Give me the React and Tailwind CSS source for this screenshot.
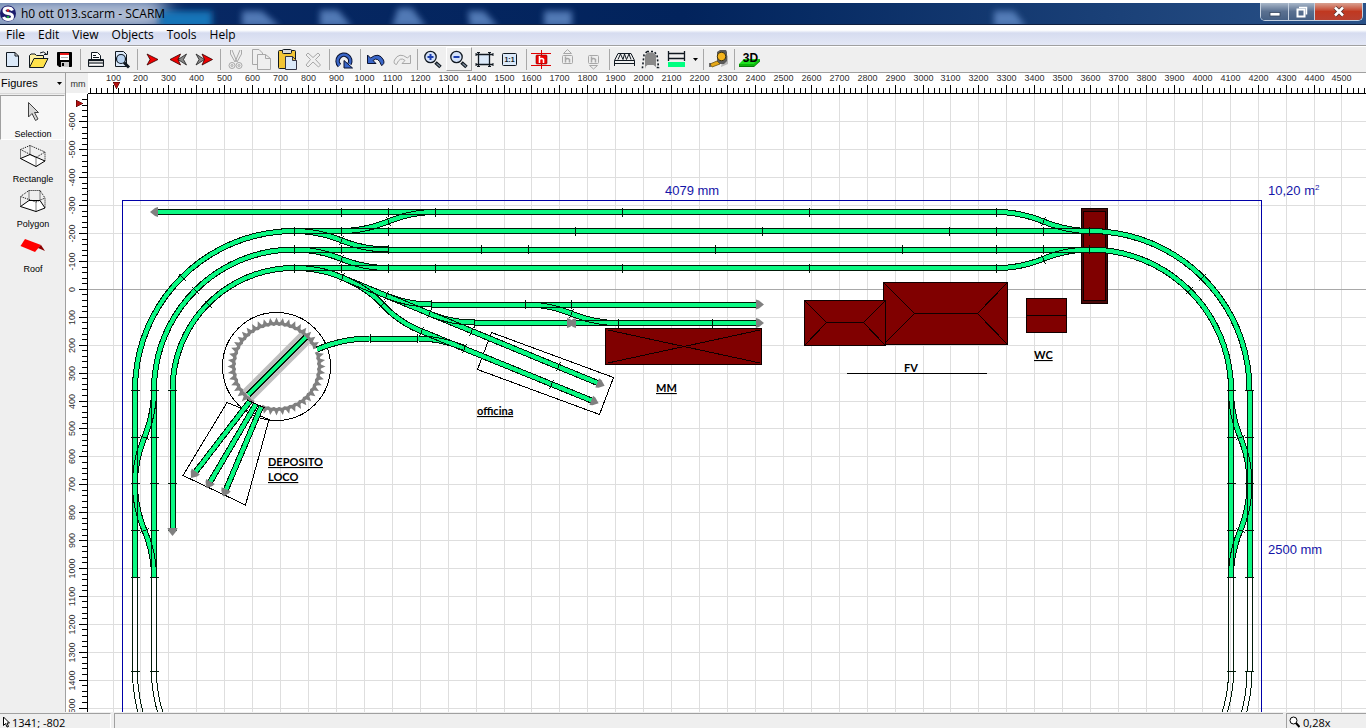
import React from "react";

/* ---------- scale helpers (millimetres to canvas units) ---------- */
const ORIGIN_X = 88;
const ORIGIN_Y = 94;
const gx = (mm) => Math.floor(85.1 + mm * 0.2793) + 0.5;
const gy = (mm) => Math.floor(289.4 + mm * 0.2791) + 0.5;
const range = (from, to, step) => {
  const out = [];
  for (let v = from; v <= to; v += step) out.push(v);
  return out;
};

/* ---------- track geometry ---------- */
const K = 0.5523;
const line = (x1, y1, x2, y2) => [[x1, y1], [x2, y2]];
const curve = (...p) => {
  const pts = [];
  for (let s = 0; s + 6 < p.length; s += 6) {
    const [x0, y0, x1, y1, x2, y2, x3, y3] = p.slice(s, s + 8);
    for (let i = s ? 1 : 0; i <= 20; i++) {
      const t = i / 20;
      const u = 1 - t;
      pts.push([
        u * u * u * x0 + 3 * u * u * t * x1 + 3 * u * t * t * x2 + t * t * t * x3,
        u * u * u * y0 + 3 * u * u * t * y1 + 3 * u * t * t * y2 + t * t * t * y3,
      ]);
    }
  }
  return pts;
};
const quarter = (x1, y1, x2, y2) =>
  curve(x1, y1, x1 + (x2 - x1) * K, y1, x2, y2 - (y2 - y1) * K, x2, y2);
const sH = (x0, y0, x1, y1) => {
  const mx = (x0 + x1) / 2;
  const my = (y0 + y1) / 2;
  const d = y1 > y0 ? 6 : -6;
  return curve(x0, y0, x0 + 16, y0, mx - 15, my - d, mx, my, mx + 15, my + d, x1 - 16, y1, x1, y1);
};
const sV = (x0, y0, x1, y1) => {
  const mx = (x0 + x1) / 2;
  const my = (y0 + y1) / 2;
  const d = x1 > x0 ? 6 : -6;
  return curve(x0, y0, x0, y0 + 16, mx - d, my - 15, mx, my, mx + d, my + 15, x1, y1 - 16, x1, y1);
};

const TRACKS = [
  line(157, 212, 999, 212),
  line(294, 231, 1090, 231),
  line(294, 249.5, 1090, 249.5),
  line(294, 268, 999, 268),
  quarter(294, 231, 135, 390),
  quarter(294, 249.5, 154, 390),
  quarter(294, 268, 172.5, 390),
  line(135, 390, 135, 577),
  line(154, 390, 154, 577),
  line(172.5, 390, 172.5, 530),
  sV(154, 390, 135, 484),
  sV(135, 484, 154, 577),
  sH(341, 231, 435, 212),
  sH(294, 231, 388, 249.5),
  sH(294, 249.5, 388, 268),
  sH(997, 212, 1090, 231),
  sH(997, 268, 1090, 249.5),
  quarter(1090, 231, 1249.5, 390),
  quarter(1090, 249.5, 1231, 390),
  line(1249.5, 390, 1249.5, 577),
  line(1231, 390, 1231, 577),
  sV(1231, 390, 1249.5, 484),
  sV(1249.5, 484, 1231, 577),
  curve(294, 268, 311, 268, 327, 271, 342, 277.5),
  line(342, 277.5, 600, 384),
  curve(342, 277.5, 356, 283.5, 370, 291, 382, 304, 393, 316, 406, 325, 421, 331),
  line(421, 331, 594, 401.5),
  curve(386, 295.5, 401, 301.5, 415, 304.5, 431.5, 304.5),
  line(431.5, 304.5, 758, 304.5),
  curve(429, 313.5, 444, 319.5, 458, 322.5, 474.5, 322.5),
  line(474.5, 322.5, 570, 322.5),
  line(574, 323, 758, 323),
  sH(525.5, 304.5, 618, 323),
  curve(317, 349.5, 335, 342, 352, 338.5, 370.5, 338.5),
  line(370.5, 338.5, 417.5, 338.5),
  curve(417.5, 338.5, 434, 338.5, 449, 342, 464.5, 348),
  line(250, 401, 194, 474),
  line(256, 404, 209, 484),
  line(261, 407, 225, 492),
];

const HIDDEN_TRACKS = [
  line(135, 577, 135, 671),
  line(154, 577, 154, 671),
  line(1231, 577, 1231, 671),
  line(1249.5, 577, 1249.5, 671),
  quarter(294, 830, 135, 671),
  quarter(294, 811, 154, 671),
  quarter(1090, 830, 1249.5, 671),
  quarter(1090, 811, 1231, 671),
];

const BRIDGE = line(305.5, 337.5, 248, 395);

const offset = (pts, d) =>
  pts
    .map(([x, y], i) => {
      const [ax, ay] = pts[Math.max(0, i - 1)];
      const [bx, by] = pts[Math.min(pts.length - 1, i + 1)];
      const l = Math.hypot(bx - ax, by - ay) || 1;
      return `${(x - ((by - ay) / l) * d).toFixed(2)},${(y + ((bx - ax) / l) * d).toFixed(2)}`;
    })
    .join(" ");
const toPoints = (pts) => pts.map((p) => p.join(",")).join(" ");

/* joints: [x, y, track direction in degrees] */
const JOINTS = [
  ...[341, 388, 435, 622, 809, 996].map((x) => [x, 212, 0]),
  ...[294, 341, 388, 575, 762, 949, 996, 1043, 1089].map((x) => [x, 231, 0]),
  ...[294, 341, 388, 481, 528, 715, 902, 996, 1043, 1089].map((x) => [x, 249.5, 0]),
  ...[294, 341, 388, 435, 622, 809, 996].map((x) => [x, 268, 0]),
  ...[431, 525, 571].map((x) => [x, 304.5, 0]),
  ...[474, 618, 712].map((x) => [x, 323, 0]),
  [370, 338.5, 0], [417, 338.5, 0],
  ...[390, 437, 483, 530, 577, 671].flatMap((y) => [135, 154, 1231, 1249.5].map((x) => [x, y, 90])),
  [172.5, 390, 90], [172.5, 483, 90], [172.5, 530, 90],
  [182, 277.5, -45], [195, 290.5, -45], [208, 304, -45],
  [1202, 277.5, 45], [1189, 290.5, 45],
  [388, 221.5, -22], [341, 240, 22], [341, 259, 22], [342, 277.5, 22],
  [1043, 221.5, 22], [1043, 259, -22],
  [386, 295.5, 22], [429, 313.5, 22], [471, 331, 22], [558, 366.5, 22],
  [382, 304, 45], [421, 331, 22], [464.5, 348.5, 22], [551, 384, 22], [571, 313.5, 22],
  [144.5, 437, 112], [144.5, 530, 68], [1240, 437, 68], [1240, 530, 112],
];

const BUFFERS = [
  [155, 212, 180], [172.5, 531, 90], [759, 304.5, 0], [759, 323, 0],
  [573, 323, 180], [570, 323, 0], [600, 384, 22], [594, 401.5, 22],
  [194, 474, 127], [209, 484, 120], [225, 492, 113],
];

const TEETH = range(0, 352.5, 7.5).filter((a) => !(a >= 110 && a <= 126) && a !== 337.5);

function TrackPlan() {
  return (
    <svg className="block h-full w-full" role="img" aria-label="Track plan">
      <g transform={`translate(${-ORIGIN_X} ${-ORIGIN_Y})`}>
        <g shapeRendering="crispEdges">
          {range(100, 9000, 100).map((mm) => (
            <line key={`v${mm}`} x1={gx(mm)} x2={gx(mm)} y1="0" y2="3000" stroke="#dedede" />
          ))}
          {range(-600, 9000, 100).map((mm) => (
            <line key={`h${mm}`} x1="0" x2="4000" y1={gy(mm)} y2={gy(mm)} stroke={mm === 0 ? "#a8a8a8" : "#dedede"} />
          ))}
        </g>
        <rect x="122.5" y="200.5" width="1139" height="699" fill="none" stroke="#0000a8" shapeRendering="crispEdges" />

        {/* buildings */}
        <g fill="#800000" stroke="#100000" shapeRendering="crispEdges">
          <rect x="605.5" y="328.5" width="156" height="36" />
          <path d="M608 330L760 363M608 363L760 330" />
          <rect x="883.5" y="282.5" width="124" height="62" />
          <path d="M884 283L914.5 313.5L884 344M1007 283L977.5 313.5L1007 344M914.5 313.5H977.5" fill="none" />
          <rect x="804.5" y="300.5" width="81" height="45" />
          <path d="M805 301L826.5 322.5L805 345M885 301L863.5 322.5L885 345M826.5 322.5H863.5" fill="none" />
          <rect x="1026.5" y="298.5" width="40" height="34" />
          <path d="M1026.5 315.5H1066.5" />
          <rect x="1081.5" y="208.5" width="26" height="95" fill="#4a0808" />
          <rect x="1083.5" y="211.5" width="22" height="89" />
        </g>

        <g fill="none" stroke="#000" shapeRendering="crispEdges">
          <path d="M491.5 332.5L613.5 377.5L599.5 414.5L477.5 369.5Z" />
          <path d="M227 402.5L183 475.5L245.5 505L269 419.5Z" />
        </g>
        <circle cx="276.5" cy="366.5" r="54" fill="none" stroke="#000" shapeRendering="crispEdges" />
        <line x1="308" y1="335" x2="245.5" y2="397.5" stroke="#c0c0c0" strokeWidth="15" />
        {TEETH.map((a) => (
          <path key={a} d="M0 -49L2 -44.500L4 -43.500L3.500 -40.500L0 -41.500L-3.500 -40.500L-4 -43.500L-2 -44.500Z" fill="#808080" transform={`translate(276.5 366.5) rotate(${a + 90})`} />
        ))}
        <g shapeRendering="crispEdges" fill="none">
          {[...TRACKS, BRIDGE].map((t, i) => (
            <polyline key={i} points={toPoints(t)} stroke="#0af882" strokeWidth="5" />
          ))}
          {[...TRACKS, ...HIDDEN_TRACKS, BRIDGE].map((t, i) => (
            <g key={i} stroke="#001a08">
              <polyline points={offset(t, 2.5)} />
              <polyline points={offset(t, -2.5)} />
            </g>
          ))}
          <path d="M247 400L265 408" stroke="#000" />
        </g>
        <g stroke="#001a08" shapeRendering="crispEdges">
          {JOINTS.map(([x, y, a], i) => (
            <line key={i} x1="0" x2="0" y1="-4.5" y2="4.5" transform={`translate(${Math.floor(x) + 0.5} ${Math.floor(y) + 0.5}) rotate(${a})`} />
          ))}
        </g>
        {BUFFERS.map(([x, y, a], i) => (
          <path key={i} d="M-3 -5L0 -4L5 0L0 4L-3 5L-3 0Z" fill="#808080" transform={`translate(${x} ${y}) rotate(${a})`} />
        ))}

        <g fill="#1414a8" fontFamily="'Liberation Sans', Arial, sans-serif" fontSize="13">
          <text x="665" y="195">4079 mm</text>
          <text x="1268" y="195">10,20 m<tspan fontSize="8" dy="-5">2</tspan></text>
          <text x="1268" y="554">2500 mm</text>
        </g>
        <g fill="#000" fontFamily="Lato, 'Open Sans', sans-serif" fontWeight="700" fontSize="11">
          <g textDecoration="underline">
            <text x="268" y="466">DEPOSITO</text>
            <text x="268" y="481">LOCO</text>
            <text x="477" y="415">officina</text>
            <text x="656" y="392">MM</text>
            <text x="1034" y="359">WC</text>
          </g>
          <text x="904" y="372">FV</text>
          <line x1="847" x2="987" y1="373.5" y2="373.5" stroke="#000" shapeRendering="crispEdges" />
        </g>
      </g>
    </svg>
  );
}

function TopRuler() {
  return (
    <svg className="block h-full w-full bg-white" aria-hidden="true">
      <g transform={`translate(${-ORIGIN_X} -73)`} shapeRendering="crispEdges">
        <g fill="#303030" fontFamily="'Liberation Sans', Arial, sans-serif" fontSize="9" textAnchor="middle">
          {range(100, 4500, 100).map((mm) => (
            <text key={mm} x={gx(mm)} y="81">{mm}</text>
          ))}
        </g>
        {range(20, 8000, 20).map((mm) => (
          <line key={mm} x1={gx(mm)} x2={gx(mm)} y1={mm % 100 ? 88 : 85} y2="93" stroke="#000" />
        ))}
        <line x1="88" x2="4000" y1="93.5" y2="93.5" stroke="#000" />
        <path d="M113 82H120L116.500 89Z" fill="#b01010" stroke="#400" strokeWidth="0.5" />
      </g>
    </svg>
  );
}

function SideRuler() {
  return (
    <svg className="block h-full w-full bg-white" aria-hidden="true">
      <g transform={`translate(-66 ${-ORIGIN_Y})`} shapeRendering="crispEdges">
        <g fill="#303030" fontFamily="'Liberation Sans', Arial, sans-serif" fontSize="9" textAnchor="middle">
          {range(-600, 1500, 100).map((mm) => (
            <text key={mm} transform={`translate(75 ${gy(mm)}) rotate(-90)`}>{mm}</text>
          ))}
        </g>
        {range(-680, 6000, 20).map((mm) => (
          <line key={mm} x1={mm % 100 ? 82 : 79} x2="87" y1={gy(mm)} y2={gy(mm)} stroke="#000" />
        ))}
        <line x1="87.5" x2="87.5" y1="94" y2="4000" stroke="#000" />
        <path d="M76 100V107L83 103.500Z" fill="#b01010" stroke="#400" strokeWidth="0.5" />
      </g>
    </svg>
  );
}

/* ---------- toolbar icons, drawn on a 26 x 24 field ---------- */
const INK = "#101820";
const OFF = "#a8a8a8";
const Magnifier = ({ sign }) => (
  <>
    <path d="M15.500 15.500L20.500 20" stroke={INK} strokeWidth="3.600" />
    <path d="M16.500 16.500L20 19.500" stroke="#8090a0" strokeWidth="1.200" />
    <circle cx="10.500" cy="10" r="5.700" fill="#d4e2fa" stroke={INK} strokeWidth="1.300" />
    <path d={sign === "+" ? "M7.500 10H13.500M10.500 7V13" : "M7.500 10H13.500"} stroke="#1c3fb0" strokeWidth="2" />
  </>
);
const HBox = ({ c }) => (
  <>
    <rect x="7.500" y="8.500" width="10" height="8" rx="1" fill="none" stroke={c} />
    <path d="M10.500 9.500V15.500M10.500 12.500Q12.500 10.500 14.500 12.500V15.500" fill="none" stroke={c} strokeWidth="1.500" />
  </>
);
const ICONS = {
  new: <path d="M6.500 5.500H15L18.500 9V19.500H6.500ZM15 5.500V9H18.500" fill="#dbe9f9" stroke={INK} />,
  open: (
    <>
      <path d="M3.500 20.500V8.500L5 7H9L10.500 8.500H17.500V11.500" fill="#fff0a0" stroke={INK} />
      <path d="M3.500 20.500L8 11.500H22L17.500 20.500Z" fill="#ffe24a" stroke={INK} />
      <path d="M14 6Q17.500 3.500 20.500 7M21.500 4V7.500H18" fill="none" stroke={INK} />
    </>
  ),
  save: (
    <>
      <path d="M5.500 5.500H19.500V19.500H7L5.500 18Z" fill="#000" stroke="#000" />
      <rect x="8" y="6" width="9" height="7" fill="#fff" />
      <rect x="8" y="6" width="9" height="2" fill="#e81818" />
      <rect x="9" y="10" width="7" height="1" fill="#b0b0b0" />
      <rect x="9" y="15" width="8" height="5" fill="#c8c8c8" />
      <rect x="10" y="16" width="2" height="3" fill="#000" />
    </>
  ),
  print: (
    <>
      <path d="M8.500 12.500V5.500H14.500L17.500 8.500V12.500" fill="#fff" stroke={INK} />
      <path d="M10 8.500H13M10 10.500H16" stroke={INK} />
      <path d="M5.500 12.500H20.500V19.500H5.500Z" fill="#d8d8d8" stroke={INK} />
      <path d="M5 16H21M6 13.500H20" stroke={INK} />
      <path d="M7 17.500H19" stroke="#fff" />
    </>
  ),
  preview: (
    <>
      <path d="M6.500 4.500H14.500L17.500 7.500V19.500H6.500Z" fill="#dbe9f9" stroke={INK} />
      <path d="M15 15.500L20 20.500" stroke={INK} strokeWidth="3" />
      <circle cx="12" cy="12" r="4.500" fill="#b9d4f2" stroke={INK} strokeWidth="1.200" />
    </>
  ),
  play: <path d="M7 7L18 12.500L7 18L10 12.500Z" fill="#f00000" stroke="#300" strokeWidth="0.800" />,
  back: (
    <>
      <path d="M20.500 7L12 12.500L20.500 18L17.500 12.500Z" fill="#888" stroke="#222" strokeWidth="0.800" />
      <path d="M14.500 7L4 12.500L14.500 18L12 12.500Z" fill="#f00000" stroke="#300" strokeWidth="0.800" />
    </>
  ),
  forward: (
    <>
      <path d="M4 7L12.500 12.500L4 18L7 12.500Z" fill="#888" stroke="#222" strokeWidth="0.800" />
      <path d="M10 7L20.500 12.500L10 18L12.500 12.500Z" fill="#f00000" stroke="#300" strokeWidth="0.800" />
    </>
  ),
  cut: (
    <g fill="none" stroke={OFF}>
      <path d="M7.500 3V7L12 15M9 3L14 15M17 3L12 15M18.500 3V7L14 15" />
      <circle cx="9" cy="18.500" r="3" />
      <circle cx="16" cy="18.500" r="3" />
      <circle cx="9" cy="18.500" r="1" />
      <circle cx="16" cy="18.500" r="1" />
    </g>
  ),
  copy: (
    <g fill="#efefef" stroke={OFF}>
      <path d="M3.500 2.500H10L13.500 6V17.500H3.500Z" />
      <path d="M8.500 7.500H16.500L21.500 11.500V22.500H8.500ZM16.500 7.500V11.500H21.500" />
    </g>
  ),
  paste: (
    <>
      <rect x="3.500" y="3.500" width="17" height="18" rx="1" fill="#f2c535" stroke={INK} />
      <rect x="7.500" y="2.500" width="9" height="4" rx="1" fill="#d8d8d8" stroke={INK} />
      <path d="M10.500 9.500H17.500L21.500 13.500V22.500H10.500ZM17.500 9.500V13.500H21.500" fill="#dbe9f9" stroke="#334" />
    </>
  ),
  remove: <path d="M5 8L7 6L12 10.500L17 6L19 8L14.500 12.500L19.500 18L17.500 20L12 15L7 20L5 18L9.500 12.500Z" fill="none" stroke={OFF} />,
  rotate: (
    <>
      <path d="M7.500 18.500A6.300 6.300 0 1 1 17.500 17" fill="none" stroke="#0a1230" strokeWidth="4.600" />
      <path d="M12 13.500V21H20.500Z" fill="#3a66c8" stroke="#0a1230" />
      <path d="M7.500 18.500A6.300 6.300 0 1 1 17.500 17" fill="none" stroke="#3a66c8" strokeWidth="2.600" />
    </>
  ),
  undo: (
    <path d="M4.500 8V16.500H13L10 13.500Q15 9 18.500 18.500Q22 17 20.500 13Q16 4.500 7.500 11Z" fill="#3a66c8" stroke="#0a1230" />
  ),
  redo: <path d="M21.500 8V16.500H13L16 13.500Q11 9 7.500 17.500Q4 17 5.500 13Q10 4.500 18.500 11Z" fill="none" stroke={OFF} />,
  zoomIn: <Magnifier sign="+" />,
  zoomOut: <Magnifier sign="-" />,
  fit: (
    <>
      <rect x="7" y="8" width="11" height="9" fill="#dbe9f9" />
      <path d="M4 7.500H21M4 17.500H21M6.500 5V20M17.500 5V20" stroke={INK} strokeWidth="1.300" />
      <path d="M4 6V9M21 6V9M4 16V19M21 16V19M5 5.500H8M16 5.500H19M5 19.500H8M16 19.500H19" stroke={INK} />
    </>
  ),
  actual: (
    <>
      <rect x="4.500" y="6.500" width="14" height="12" rx="1" fill="#dbe9f9" stroke={INK} />
      <text x="11.500" y="15" textAnchor="middle" fontSize="7" fontWeight="700" fontFamily="'Liberation Sans', Arial, sans-serif" fill={INK}>1:1</text>
    </>
  ),
  height: (
    <>
      <path d="M2 6.500H22M2 18.500H22M12.500 3V22" stroke="#e00000" />
      <rect x="7" y="8" width="11" height="9" rx="1" fill="#f00000" stroke="#700" strokeWidth="0.600" />
      <path d="M10.500 9V16M10.500 12.500Q13 10.500 14.500 12.500V16" fill="none" stroke="#fff" strokeWidth="1.600" />
    </>
  ),
  raise: (
    <>
      <path d="M8.500 6.500L12.500 2.500L16.500 6.500Z" fill="none" stroke={OFF} />
      <HBox c={OFF} />
    </>
  ),
  lower: (
    <>
      <path d="M8.500 18.500L12.500 22L16.500 18.500Z" fill="none" stroke={OFF} />
      <HBox c={OFF} />
    </>
  ),
  bridge: (
    <path d="M6 6.500H19M6 6.500L2.500 13.500V19M19 6.500L22.500 13.500V19M2.500 13.500H22.500M2.500 16.500H22.500M6 12.500L8.500 7L11 12.500L12.500 7L14.500 12.500L17 7L19 12.500" fill="none" stroke={INK} />
  ),
  tunnel: (
    <>
      <path d="M7 20V8L10 5.500H15L18 8V20L15.500 18H9.500Z" fill="#888" />
      <path d="M9 4.500H16L19 8L20.500 20.500H17.500M9 4.500L6 8L4.500 20.500H7.500" fill="none" stroke={INK} strokeWidth="1.600" strokeDasharray="2 2" />
    </>
  ),
  color: (
    <>
      <path d="M4 6.500H21M4 11.500H21M4.500 4V14M20.500 4V14" stroke={INK} strokeWidth="1.300" />
      <rect x="4" y="15" width="17" height="5" fill="#00ff80" />
    </>
  ),
  measure: (
    <>
      <path d="M15 20L22 17V9L18 6Z" fill="#b8b8b8" />
      <path d="M11 5L14 3H20L21 5V14L18 17H11Z" fill="#5a5a5a" />
      <circle cx="15.500" cy="9.500" r="4.200" fill="#f4b41c" stroke="#3a3210" />
      <path d="M4 17L11 14L14 17L6 20Z" fill="#e6a818" stroke="#6a5010" strokeWidth="0.800" />
      <path d="M4 16V20" stroke="#444" strokeWidth="1.500" />
    </>
  ),
  threeD: (
    <>
      <path d="M2 17L7 12H23L17 18H2Z" fill="#1fe01f" />
      <path d="M2 17H17L23 12V14.500L17 20H2Z" fill="#067a06" />
      <path d="M2.500 18H17L22.500 13" fill="none" stroke="#0fc80f" strokeWidth="1.500" />
      <text x="13.500" y="15" textAnchor="middle" fontSize="12" fontWeight="700" fontFamily="'Liberation Sans', Arial, sans-serif" fill="#000">3D</text>
    </>
  ),
};

const TOOLBAR = [
  [["new", "New"], ["open", "Open"], ["save", "Save"]],
  [["print", "Print"], ["preview", "Print preview"]],
  [["play", "Start"], ["back", "Step back"], ["forward", "Step forward"]],
  [["cut", "Cut"], ["copy", "Copy"], ["paste", "Paste"], ["remove", "Delete"]],
  [["rotate", "Rotate"]],
  [["undo", "Undo"], ["redo", "Redo"]],
  [["zoomIn", "Zoom in"], ["zoomOut", "Zoom out"], ["fit", "Fit"], ["actual", "Actual size"]],
  [["height", "Heights"], ["raise", "Raise"], ["lower", "Lower"]],
  [["bridge", "Bridge"], ["tunnel", "Tunnel"], ["color", "Track color"], ["caret", "More colors"]],
  [["measure", "Measure"]],
  [["threeD", "3D view"]],
];

const Caret = () => (
  <svg width="5" height="3" viewBox="0 0 5 3" aria-hidden="true"><path d="M0 0H5L2.500 3Z" fill="#000" /></svg>
);

function ToolButton({ id, label }) {
  if (id === "caret") {
    return (
      <button type="button" aria-label={label} className="flex h-6 w-[11px] items-center justify-center"><Caret /></button>
    );
  }
  const raised = id === "zoomOut" ? "border-l-white border-t-white border-r-[#a0a0a0] border-b-[#a0a0a0]" : "border-transparent";
  return (
    <button type="button" aria-label={label} className={`flex h-6 w-[26px] items-center justify-center border ${raised}`}>
      <svg width="26" height="24" viewBox="0 0 26 24" className="shrink-0" aria-hidden="true">{ICONS[id]}</svg>
    </button>
  );
}

const Cube = ({ children }) => (
  <svg width="26" height="24" viewBox="0 0 26 24" fill="none" stroke="#000" aria-hidden="true">{children}</svg>
);
const FIGURES = [
  ["Selection", (
    <svg width="26" height="24" viewBox="0 0 26 24" aria-hidden="true">
      <path d="M8.500 2.500V17L12 13.500L15.500 20.500L18 19L14.500 12.500H18.500Z" fill="#d8d8d8" stroke="#404040" />
    </svg>
  )],
  ["Rectangle", (
    <Cube>
      <path d="M.5 13.500L10 9.500L25 16L16 21.500Z" fill="#fff" />
      <path d="M.5 13.500V4.500L10 .5L25 7V16M16 21.500V12.500L.5 4.500M16 12.500L25 7M10 .5V9.500" strokeDasharray="1 1" />
    </Cube>
  )],
  ["Polygon", (
    <Cube>
      <path d="M.5 16.500L9 10.500H20L25 18L16 21.500Z" fill="#fff" />
      <path d="M.5 16.500V6.500L9 .5H20L25 8V18M16 21.500V12L.5 6.500M16 12L25 8M9 .5V10.500M20 .5V10.500" strokeDasharray="1 1" />
    </Cube>
  )],
  ["Roof", (
    <svg width="26" height="24" viewBox="0 0 26 24" aria-hidden="true">
      <path d="M5 4L21 10L15 17L.5 11Z" fill="#f00" />
      <path d="M21 10L25 16L18 13Z" fill="#8b0000" />
    </svg>
  )],
];

function TitleBackdrop() {
  return (
    <svg className="absolute inset-0 h-full w-full" aria-hidden="true">
      <defs>
        <filter id="soft" x="-30%" y="-60%" width="160%" height="220%"><feGaussianBlur stdDeviation="3" /></filter>
        <filter id="wide" x="-30%" y="-100%" width="160%" height="300%"><feGaussianBlur stdDeviation="10 4" /></filter>
      </defs>
      <rect x="-20" y="-4" width="185" height="30" fill="#8fa3c4" filter="url(#wide)" />
      <rect x="14" y="5" width="140" height="13" fill="#b0bdd3" filter="url(#wide)" />
      <rect x="160" y="8" width="52" height="18" fill="#1474b8" filter="url(#soft)" />
      <g fill="#5f88c4" filter="url(#soft)" opacity="0.850">
        <path d="M242 8H262L280 24H242Z" />
        <path d="M320 7H338L352 24H320Z" />
        <path d="M398 5H412L426 24H392Z" />
        <path d="M468 8H484L498 24H470Z" />
        <path d="M544 8H572V24H544Z" />
        <path d="M994 8H1014L1026 24H994Z" />
      </g>
    </svg>
  );
}

export default function App() {
  return (
    <div className="flex h-screen flex-col overflow-hidden bg-[#efefef] font-['Liberation_Sans',Arial,sans-serif] text-black">
      <header className="relative flex h-[25px] shrink-0 items-start justify-between overflow-hidden border-t-[3px] border-b border-t-white border-b-[#102040] bg-linear-to-r from-[#0a2a66] via-[#02235c] to-[#2a5288]">
        <TitleBackdrop />
        <h1 className="relative flex h-[21px] items-center gap-1 font-['Open_Sans','Noto_Sans',sans-serif] text-[12px] leading-none font-normal">
          <svg width="17" height="17" viewBox="0 0 17 17" aria-hidden="true">
            <circle cx="8" cy="8.500" r="8" fill="#1c1c6c" />
            <path d="M12.500 5.500Q11.500 3 8 3Q4 3 4 5.800Q4 8 8 8.500Q12.500 9 12.500 11.500Q12.500 14.500 8 14.500Q4.500 14.500 3.500 12" fill="none" stroke="#fff" strokeWidth="3" />
            <circle cx="8" cy="5.500" r="1.300" fill="#e02020" />
            <circle cx="8" cy="12" r="1.300" fill="#20a040" />
          </svg>
          h0 ott 013.scarm - SCARM
        </h1>
        <div className="relative mr-[3px] flex h-[18px] overflow-hidden rounded-b-[5px] border border-t-0 border-[#c4d0e0]">
          <button type="button" aria-label="Minimize" className="flex w-7 items-center justify-center border-r border-[#c4d0e0] bg-linear-to-b from-[#a8b6c8] via-[#5a7090] to-[#466084]">
            <svg width="12" height="12" viewBox="0 0 12 12" aria-hidden="true"><rect x="1" y="6.500" width="10" height="3.500" fill="#fff" stroke="#34445c" strokeWidth="0.800" /></svg>
          </button>
          <button type="button" aria-label="Restore" className="flex w-[26px] items-center justify-center border-r border-[#c4d0e0] bg-linear-to-b from-[#a8b6c8] via-[#5a7090] to-[#466084]">
            <svg width="13" height="12" viewBox="0 0 13 12" fill="none" aria-hidden="true">
              <path d="M4 1.500H11.500V8.500" stroke="#fff" strokeWidth="1.500" />
              <rect x="2.500" y="3.500" width="7" height="7" stroke="#fff" strokeWidth="2" />
            </svg>
          </button>
          <button type="button" aria-label="Close" className="flex w-[47px] items-center justify-center bg-linear-to-b from-[#d8a090] via-[#c03820] to-[#b84030]">
            <svg width="12" height="11" viewBox="0 0 12 11" aria-hidden="true">
              <path d="M2 1.500L10 9.500M10 1.500L2 9.500" stroke="#503030" strokeWidth="4" />
              <path d="M2 1.500L10 9.500M10 1.500L2 9.500" stroke="#fff" strokeWidth="2.600" />
            </svg>
          </button>
        </div>
      </header>

      <nav className="flex h-[21px] shrink-0 items-center gap-[13px] border-b border-[#a0a0a0] bg-linear-to-b from-white from-25% via-[#d6dcf0] via-40% to-[#e4e8f6] pl-[6px] font-['Open_Sans','Noto_Sans',sans-serif] text-[12px] leading-none">
        {["File", "Edit", "View", "Objects", "Tools", "Help"].map((m) => (
          <button key={m} type="button">{m}</button>
        ))}
      </nav>

      <div role="toolbar" aria-label="Main tools" className="flex h-[27px] shrink-0 items-start border-t border-b border-t-white border-b-[#a0a0a0]">
        {TOOLBAR.map((group, g) => (
          <div key={g} className="flex items-center">
            {g > 0 && (
              <div className="flex w-[5px] justify-center"><div className="h-[21px] w-px bg-[#a8a8a8]" /></div>
            )}
            {group.map(([id, label]) => <ToolButton key={id} id={id} label={label} />)}
          </div>
        ))}
      </div>

      <div className="flex min-h-0 flex-1">
        <aside className="flex w-[66px] shrink-0 flex-col border-r border-[#a0a0a0]">
          <button type="button" className="mb-px flex h-[21px] items-center justify-between border-b border-[#d8d8d8] pr-[3px] pl-px text-[11px] leading-none">
            Figures <Caret />
          </button>
          {FIGURES.map(([name, icon], i) => (
            <button
              key={name}
              type="button"
              className={`flex h-[45px] flex-col items-center justify-between border pt-1 pl-px text-[9px] leading-[10px] ${i === 0 ? "border-t-[#a0a0a0] border-r-white border-b-white border-l-[#a0a0a0] bg-[#f7f7f7]" : "border-transparent"}`}
            >
              {icon}
              {name}
            </button>
          ))}
        </aside>

        <main className="flex min-w-0 flex-1 flex-col">
          <div className="flex h-[21px] shrink-0">
            <div className="flex w-[22px] shrink-0 items-center justify-center border-b border-white pt-[2px] pl-[2px] text-[9px] leading-none text-[#303030]">mm</div>
            <div className="min-w-0 flex-1"><TopRuler /></div>
          </div>
          <div className="flex min-h-0 flex-1">
            <div className="w-[22px] shrink-0"><SideRuler /></div>
            <div className="min-w-0 flex-1 bg-white"><TrackPlan /></div>
          </div>
        </main>
      </div>

      <footer className="flex h-4 shrink-0 gap-[3px] pt-px font-['Open_Sans','Noto_Sans',sans-serif] text-[11px] leading-none">
        <div className="flex w-[111px] items-center gap-[2px] border-t border-r border-t-[#a0a0a0] border-r-white pt-[2px] pl-[2px]">
          <svg width="8" height="12" viewBox="0 0 8 12" aria-hidden="true"><path d="M1.500 1V9.500L3.500 7.500L5 11L6.500 10.500L5 7H7.500Z" fill="#fff" stroke="#000" /></svg>
          1341; -802
        </div>
        <div className="flex-1 border-t border-l border-[#a0a0a0]" />
        <div className="flex w-[80px] items-center gap-[3px] border-t border-l border-[#a0a0a0] pt-[2px] pl-[2px]">
          <svg width="11" height="12" viewBox="0 0 11 12" aria-hidden="true">
            <circle cx="4.500" cy="4.500" r="3.500" fill="#fff" stroke="#000" />
            <path d="M7 7L10.500 11" stroke="#000" strokeWidth="2" />
          </svg>
          0,28x
        </div>
      </footer>
    </div>
  );
}
